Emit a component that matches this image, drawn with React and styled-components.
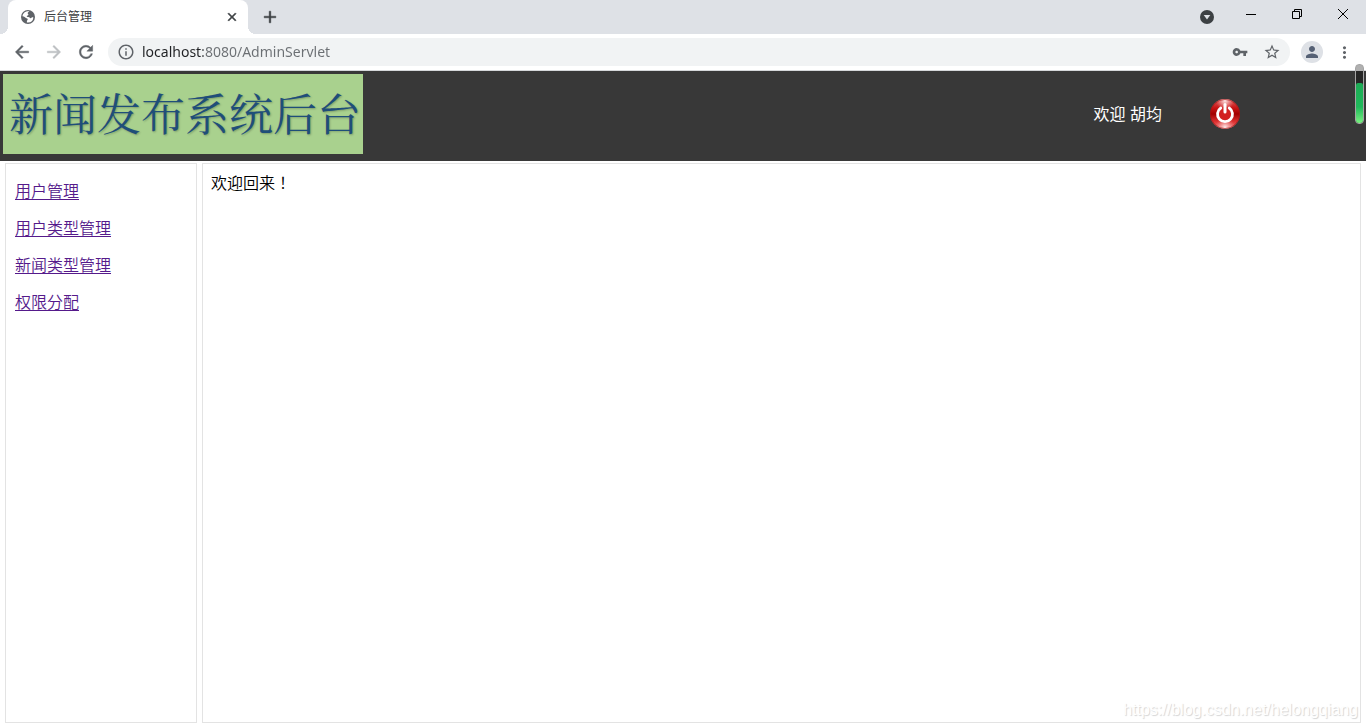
import React from "react";
import styled, { createGlobalStyle } from "styled-components";
import {
  MdAdd,
  MdArrowBack,
  MdArrowForward,
  MdClose,
  MdInfoOutline,
  MdMoreVert,
  MdPerson,
  MdRefresh,
  MdStarBorder,
  MdVpnKey,
} from "react-icons/md";

const GlobalStyle = createGlobalStyle`
  * { box-sizing: border-box; }
  body {
    margin: 0;
    background: #fff;
    color: #000;
    font: 16px/21px "Liberation Sans", "Noto Sans CJK SC", sans-serif;
  }
  button {
    border: 0;
    padding: 0;
    background: none;
    color: inherit;
    cursor: pointer;
  }
  svg { display: block; }
`;

const Window = styled.div`
  display: flex;
  flex-direction: column;
  min-height: 100vh;
`;

/* ---- browser frame ---- */

const TabStrip = styled.div`
  display: flex;
  height: 34px;
  padding-left: 8px;
  background: #dee1e6;
`;

const Tab = styled.div`
  position: relative;
  display: flex;
  align-items: center;
  gap: 8px;
  width: 240px;
  padding: 0 8px 0 12px;
  border-radius: 8px 8px 0 0;
  background: #fff;
  color: #3c4043;

  &::before,
  &::after {
    content: "";
    position: absolute;
    bottom: 0;
    width: 8px;
    height: 8px;
  }
  &::before {
    right: 100%;
    background: radial-gradient(circle at 0 0, transparent 8px, #fff 8px);
  }
  &::after {
    left: 100%;
    background: radial-gradient(circle at 100% 0, transparent 8px, #fff 8px);
  }
`;

const TabTitle = styled.span`
  flex: 1;
  font-size: 12px;
  line-height: 18px;
`;

const IconButton = styled.button`
  display: flex;
  align-items: center;
  justify-content: center;
  flex: none;
  width: ${(p) => p.$size || 32}px;
  height: ${(p) => p.$size || 32}px;
  border-radius: 50%;
  color: ${(p) => p.$color || "#5f6368"};
  background: ${(p) => p.$fill || "none"};

  /* The icon set adds an empty bounding path that must stay unstroked. */
  svg > path[fill="none"][d^="M0 0"] {
    stroke: none;
  }
`;

const NewTab = styled(IconButton)`
  margin: 1px 0 0 6px;
`;

const WindowControls = styled.div`
  display: flex;
  align-items: flex-start;
  margin-left: auto;
`;

const ControlButton = styled.button`
  display: flex;
  align-items: center;
  justify-content: center;
  width: ${(p) => (p.$narrow ? 42 : 46)}px;
  height: ${(p) => (p.$narrow ? 33 : 28)}px;
`;

const Toolbar = styled.div`
  display: flex;
  align-items: center;
  height: 37px;
  padding: 0 6px;
  border-bottom: 1px solid #d5d7da;
  background: #fff;
`;

const Omnibox = styled.div`
  display: flex;
  align-items: center;
  flex: 1;
  height: 28px;
  margin-left: 6px;
  padding: 0 2px 0 9px;
  border-radius: 14px;
  background: #f1f3f4;
  color: #5f6368;
`;

const ToolbarActions = styled.div`
  display: flex;
  align-items: center;
  gap: 5px;
  margin-left: 11px;
`;

/* The host part of the address is darker than the port and path. */
const Address = styled.input`
  flex: 1;
  min-width: 0;
  margin-left: 7px;
  padding: 0;
  border: 0;
  outline: 0;
  background: linear-gradient(90deg, #202124 61px, #6b6f73 61px);
  background-clip: text;
  -webkit-text-fill-color: transparent;
  font: 14px/20px "Noto Sans", "Open Sans", sans-serif;
`;

/* ---- page ---- */

const Header = styled.header`
  display: flex;
  align-items: flex-start;
  height: 90px;
  padding: 3px;
  background: #383838;
  color: #fff;
`;

const Banner = styled.h1`
  flex: none;
  width: 360px;
  height: 80px;
  margin: 0;
  padding-left: 6px;
  background: #a9d18e;
  color: #1f4e79;
  font: 400 44px/76px "Noto Serif CJK SC", "Noto Sans CJK SC", serif;
  text-shadow: 1px 1px 2px rgba(0, 0, 0, 0.25);
  white-space: nowrap;
`;

const Account = styled.div`
  display: flex;
  align-items: center;
  gap: 48px;
  height: 80px;
  margin: 0 123px 0 auto;
`;

const Columns = styled.div`
  display: flex;
  flex: 1;
  gap: 5px;
  padding: 2px 5px 5px;
`;

const Sidebar = styled.nav`
  flex: none;
  width: 192px;
  padding: 1px 9px;
  border: 1px solid #e3e3e3;
`;

const Menu = styled.ul`
  display: flex;
  flex-direction: column;
  gap: 16px;
  margin: 16px 0;
  padding: 0;
  list-style: none;
`;

const MenuLink = styled.a`
  color: #551a8b;
  font-weight: 350;
  text-underline-offset: 2px;
`;

const Content = styled.main`
  flex: 1;
  padding: 8px;
  border: 1px solid #e3e3e3;
`;

const Greeting = styled.p`
  margin: 0;
  font-weight: 350;
`;

/* Traditional forms centre the full-width mark in its cell. */
const CenteredMark = styled.span`
  font-family: "Noto Sans CJK TC", sans-serif;
`;

/* ---- overlays ---- */

const Gauge = styled.div`
  position: absolute;
  top: 64px;
  right: 2px;
  display: flex;
  align-items: flex-end;
  width: 9px;
  height: 60px;
  border: 1px solid #a5a5a5;
  border-radius: 4px;
  background: linear-gradient(#b0b0b0 6px, #252525 6px);
`;

const GaugeLevel = styled.div`
  width: 100%;
  height: 40px;
  border-radius: 2px 2px 3px 3px;
  background: linear-gradient(#1cab55 0, #20b95b 60%, #79f080 100%);
`;

const Watermark = styled.div`
  position: absolute;
  right: 8px;
  bottom: 8px;
  color: #fff;
  font-size: 16px;
  line-height: 20px;
  text-shadow: 1px 1px 1px #d4d4d4;
`;

const GlobeIcon = () => (
  <svg width="16" height="16" viewBox="0 0 16 16" aria-hidden="true">
    <circle cx="8" cy="8" r="7" fill="#5f6368" />
    <path
      d="M9.3 2.4c-.8.5-1.7 1-1.6 1.9.1.7.8.7.7 1.4-.1.8-1.3.7-1.6 1.4-.2.7.6 1 1.6 1 1.2 0 1.3 1.2 2.2 1.2.8 0 .9-.8 1.5-1 .5-.1.9.1 1.3.3A5.6 5.6 0 0 1 8 13.6c-.5 0-.7 0-1.1-.2v-1.3c0-.7.8-.8.8-1.6 0-1-1.1-1-1.800-1.400C5 8.500 4.500 7.500 2.500 7.300 2.700 4.600 5.100 2.300 8 2.300c.5 0 .9 0 1.300.1z"
      fill="#fff"
    />
  </svg>
);

const DownCircleIcon = () => (
  <svg width="14" height="14" viewBox="0 0 14 14" aria-hidden="true">
    <circle cx="7" cy="7" r="7" fill="#3c4043" />
    <path d="M3.700 5h6.600L7 9.600z" fill="#dee1e6" />
  </svg>
);

const MinimizeIcon = () => (
  <svg width="10" height="10" viewBox="0 0 10 10" aria-hidden="true">
    <path d="M0 5.500h10" stroke="#000" />
  </svg>
);

const RestoreIcon = () => (
  <svg width="10" height="10" viewBox="0 0 10 10" fill="none" stroke="#000" aria-hidden="true">
    <path d="M.5 2.500h7v7h-7zM2.500 2.500v-2h7v7h-2" />
  </svg>
);

const CloseWindowIcon = () => (
  <svg width="12" height="12" viewBox="0 0 12 12" stroke="#000" aria-hidden="true">
    <path d="M1 1l10 10M11 1L1 11" />
  </svg>
);

const PowerIcon = () => (
  <svg width="30" height="30" viewBox="0 0 30 30" aria-hidden="true">
    <defs>
      <linearGradient id="powerBase" x1="0" y1="0" x2="0" y2="1">
        <stop offset="0" stopColor="#e06060" />
        <stop offset="0.3" stopColor="#c81414" />
        <stop offset="0.5" stopColor="#a00000" />
        <stop offset="0.75" stopColor="#dc3030" />
        <stop offset="1" stopColor="#ee7070" />
      </linearGradient>
      <radialGradient id="powerShine">
        <stop offset="0" stopColor="#fff" stopOpacity="0.85" />
        <stop offset="1" stopColor="#ffb0b0" stopOpacity="0" />
      </radialGradient>
      <clipPath id="powerDisc">
        <circle cx="15" cy="15" r="15" />
      </clipPath>
    </defs>
    <g clipPath="url(#powerDisc)">
      <rect width="30" height="30" fill="url(#powerBase)" />
      <ellipse cx="15" cy="2" rx="9" ry="9" fill="url(#powerShine)" />
      <ellipse cx="15" cy="28" rx="10" ry="9" fill="url(#powerShine)" />
      <circle cx="15" cy="15" r="7" fill="#d22020" />
    </g>
    <circle cx="15" cy="15" r="14.600" fill="none" stroke="#a01818" strokeWidth="0.6" />
    <path
      d="M10.800 9a7.500 7.500 0 1 0 8.400 0"
      fill="none"
      stroke="#fff"
      strokeWidth="2.800"
      strokeLinecap="round"
    />
    <path d="M15 5.500v7.500" stroke="#fff" strokeWidth="3" strokeLinecap="round" />
  </svg>
);

const menuItems = ["用户管理", "用户类型管理", "新闻类型管理", "权限分配"];

export default function App() {
  return (
    <Window>
      <GlobalStyle />
      <TabStrip>
        <Tab>
          <GlobeIcon />
          <TabTitle>后台管理</TabTitle>
          <IconButton $size={16} $color="#3c4043" aria-label="关闭标签页">
            <MdClose size={14} stroke="currentColor" strokeWidth={1} />
          </IconButton>
        </Tab>
        <NewTab $color="#3c4043" aria-label="新标签页">
          <MdAdd size={20} stroke="currentColor" strokeWidth={0.5} />
        </NewTab>
        <WindowControls>
          <ControlButton $narrow aria-label="搜索标签页">
            <DownCircleIcon />
          </ControlButton>
          <ControlButton aria-label="最小化">
            <MinimizeIcon />
          </ControlButton>
          <ControlButton aria-label="还原">
            <RestoreIcon />
          </ControlButton>
          <ControlButton aria-label="关闭">
            <CloseWindowIcon />
          </ControlButton>
        </WindowControls>
      </TabStrip>
      <Toolbar>
        <IconButton aria-label="后退">
          <MdArrowBack size={20} stroke="currentColor" strokeWidth={0.5} />
        </IconButton>
        <IconButton $color="#bdc0c3" aria-label="前进">
          <MdArrowForward size={20} stroke="currentColor" strokeWidth={0.5} />
        </IconButton>
        <IconButton aria-label="重新加载">
          <MdRefresh size={20} stroke="currentColor" strokeWidth={0.5} />
        </IconButton>
        <Omnibox>
          <MdInfoOutline size={18} />
          <Address
            type="text"
            aria-label="地址"
            defaultValue="localhost:8080/AdminServlet"
          />
          <IconButton aria-label="密码">
            <MdVpnKey size={16} />
          </IconButton>
          <IconButton aria-label="收藏">
            <MdStarBorder size={18} />
          </IconButton>
        </Omnibox>
        <ToolbarActions>
          <IconButton $size={22} $fill="#dee1e6" $color="#566175" aria-label="个人资料">
            <MdPerson size={18} />
          </IconButton>
          <IconButton aria-label="菜单">
            <MdMoreVert size={19} />
          </IconButton>
        </ToolbarActions>
      </Toolbar>

      <Header>
        <Banner>新闻发布系统后台</Banner>
        <Account>
          <span>欢迎 胡均</span>
          <IconButton $size={30} aria-label="退出">
            <PowerIcon />
          </IconButton>
        </Account>
      </Header>
      <Columns>
        <Sidebar>
          <Menu>
            {menuItems.map((label) => (
              <li key={label}>
                <MenuLink href="#">{label}</MenuLink>
              </li>
            ))}
          </Menu>
        </Sidebar>
        <Content>
          <Greeting>
            欢迎回来<CenteredMark>！</CenteredMark>
          </Greeting>
        </Content>
      </Columns>

      <Gauge>
        <GaugeLevel />
      </Gauge>
      <Watermark>https://blog.csdn.net/helongqiang</Watermark>
    </Window>
  );
}
